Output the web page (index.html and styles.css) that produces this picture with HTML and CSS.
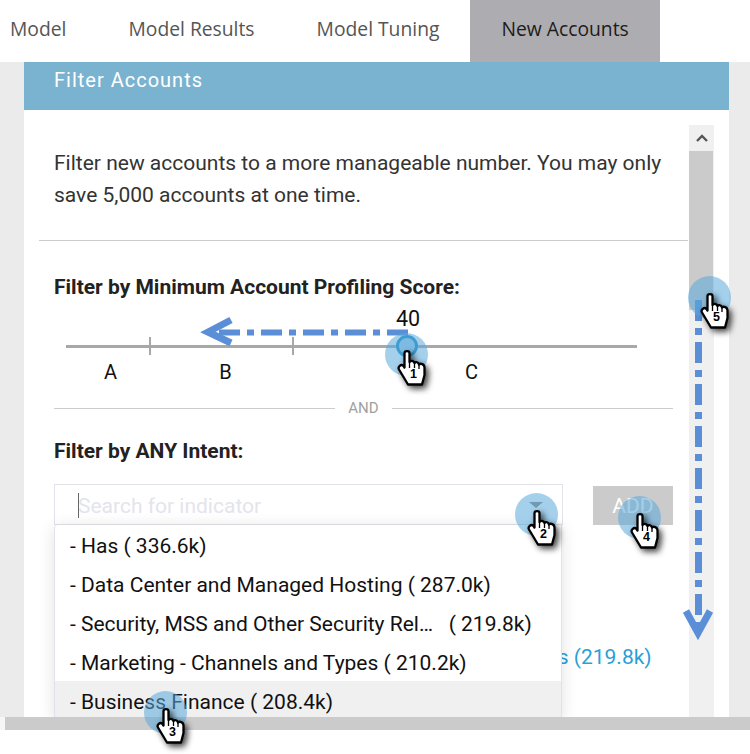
FILE: index.html
```html
<!DOCTYPE html>
<html lang="en">
<head>
    <meta charset="UTF-8">
    <meta name="viewport" content="width=device-width, initial-scale=1.0">
    <title>New Accounts</title>
    <link rel="stylesheet" href="styles.css">
</head>
<body>
    <nav class="tabs">
        <a class="tab tab-first">Model</a>
        <a class="tab">Model Results</a>
        <a class="tab">Model Tuning</a>
        <a class="tab active">New Accounts</a>
    </nav>

    <main class="stage">
        <section class="panel">
            <h1 class="panel-title">Filter Accounts</h1>
            <div class="panel-body">
                <div class="panel-content">
                    <p class="intro">Filter new accounts to a more manageable number. You may only save 5,000 accounts at one time.</p>
                    <div class="filters">
                        <h2 class="filter-label">Filter by Minimum Account Profiling Score:</h2>
                        <div class="slider">
                            <div class="slider-value">40</div>
                            <div class="slider-track">
                                <span class="grade grade-a">A</span>
                                <span class="grade grade-b">B</span>
                                <span class="grade grade-c">C</span>
                                <span class="slider-handle"></span>
                            </div>
                        </div>
                        <div class="and-divider">AND</div>
                        <h2 class="filter-label">Filter by ANY Intent:</h2>
                        <div class="search-row">
                            <div class="search-box">
                                <input class="search-input" type="text" placeholder="Search for indicator">
                                <span class="caret"></span>
                                <span class="search-arrow"></span>
                                <ul class="dropdown">
                                    <li>- Has ( 336.6k)</li>
                                    <li>- Data Center and Managed Hosting ( 287.0k)</li>
                                    <li>- Security, MSS and Other Security Rel…&nbsp;&nbsp; ( 219.8k)</li>
                                    <li>- Marketing - Channels and Types ( 210.2k)</li>
                                    <li class="hovered">- Business Finance ( 208.4k)</li>
                                </ul>
                            </div>
                            <button class="add-btn">ADD</button>
                        </div>
                        <a class="picked-link">Security, MSS and Other Security Related Services (219.8k)</a>
                    </div>
                </div>
                <div class="vscroll">
                    <div class="vscroll-up">
                        <svg width="12" height="8" viewBox="0 0 12 8"><path d="M1 7 L6 2 L11 7" fill="none" stroke="#555" stroke-width="2.4"/></svg>
                    </div>
                    <div class="vscroll-thumb"></div>
                </div>
            </div>
        </section>
    </main>

    <div class="hscroll"><div class="hscroll-thumb"></div></div>

    <svg class="arrows" width="750" height="754" viewBox="0 0 750 754">
        <path class="arrow-line arrow-thin" d="M408 332.500 H214"/>
        <path class="arrow-head" d="M231 320 L208 332 L231 343"/>
        <path class="arrow-line" d="M698.500 300 V630"/>
        <path class="arrow-head" d="M686 611 L698 633 L710 611"/>
    </svg>

    <svg width="0" height="0" class="defs">
        <symbol id="hand" viewBox="0 0 28 36" overflow="visible">
            <path d="M6.500 3 C6.500 0.500 11.500 0.500 11.500 3 V12 C12.500 10.500 16 10.500 16.500 13 C17.500 11.500 20.500 12 21 14.500 C22.500 13 26.500 14 26.500 17.500 V25 L24 34.500 H10 L1 19.500 C-0.500 17 3 13.500 5.500 16 L6.500 17.500 Z" fill="#fff" stroke="#000" stroke-width="2.300" stroke-linejoin="round"/>
            <path d="M11.500 12 V18 M16.500 13 V18 M21 14.500 V19" fill="none" stroke="#000" stroke-width="1.300"/>
        </symbol>
    </svg>

    <div class="pointer pointer-1"><span class="spot"></span><svg class="hand" width="28" height="36"><use href="#hand"/></svg><span class="step">1</span></div>
    <div class="pointer pointer-2"><span class="spot"></span><svg class="hand" width="28" height="36"><use href="#hand"/></svg><span class="step">2</span></div>
    <div class="pointer pointer-3"><span class="spot"></span><svg class="hand" width="28" height="36"><use href="#hand"/></svg><span class="step">3</span></div>
    <div class="pointer pointer-4"><span class="spot"></span><svg class="hand" width="28" height="36"><use href="#hand"/></svg><span class="step">4</span></div>
    <div class="pointer pointer-5"><span class="spot"></span><svg class="hand" width="28" height="36"><use href="#hand"/></svg><span class="step">5</span></div>
</body>
</html>
```

FILE: styles.css
```css
html, body {
    height: 100%;
    margin: 0;
    padding: 0;
}
body {
    position: relative;
    width: 750px;
    height: 754px;
    overflow: hidden;
    display: flex;
    flex-direction: column;
    background: #fff;
    font-family: Roboto, "Liberation Sans", sans-serif;
    color: #333;
}

/* tabs */
.tabs {
    display: flex;
    height: 62px;
    flex-shrink: 0;
}
.tab {
    padding: 0 31px;
    line-height: 58px;
    font-family: "Open Sans", sans-serif;
    font-size: 19.3px;
    color: #555;
}
.tab-first { margin-left: -21px; }
.tab.active {
    background: #adacb0;
    color: #1c1c1c;
}

/* main panel */
.stage {
    height: 655px;
    flex-shrink: 0;
    overflow: hidden;
    background: #ebebeb;
    padding: 0 21px 0 24px;
}
.panel {
    height: 100%;
    background: #fff;
}
.panel-title {
    height: 48px;
    margin: 0;
    padding-left: 30px;
    background: #7ab3cf;
    color: #fff;
    font-size: 20px;
    font-weight: 400;
    line-height: 36px;
    letter-spacing: 1px;
}
.panel-body {
    display: flex;
    padding: 15px 15px 0 15px;
    height: 592px;
}
.panel-content {
    width: 649px;
    margin-right: 1px;
}
.intro {
    margin: 0;
    padding: 22px 20px 29px 15px;
    font-size: 21px;
    line-height: 32px;
    border-bottom: 1px solid #ccc;
}
.filters {
    padding: 34px 15px 0 15px;
    position: relative;
}
.filter-label {
    margin: 0;
    font-size: 21px;
    font-weight: 700;
    line-height: 24px;
    color: #222;
}

/* slider */
.slider {
    padding: 8px 36px 0 12px;
}
.slider-value {
    padding-left: 330px;
    font-size: 21.500px;
    line-height: 24px;
    color: #111;
}
.slider-track {
    position: relative;
    display: grid;
    grid-template-columns: 85px 143px 343px;
    height: 3px;
    margin-top: 14px;
    margin-bottom: 51px;
    background: #a8a8a8;
}
.grade {
    position: relative;
    height: 18px;
    margin-top: -8px;
    border-right: 2px solid #a8a8a8;
    text-align: center;
    font-size: 20px;
    line-height: 70px;
    color: #111;
}
.grade-a { padding-left: 6px; }
.grade-b { padding-left: 8px; }
.grade-c { border-right: 0; padding-left: 12px; }
.slider-handle {
    position: absolute;
    left: 330px;
    top: -10px;
    width: 16px;
    height: 16px;
    border: 3px solid #1d8cc4;
    border-radius: 50%;
    background: #a8d0ea;
}

.and-divider {
    display: flex;
    align-items: center;
    gap: 13px;
    margin-bottom: 22px;
    font-size: 15px;
    line-height: 18px;
    color: #a0a0a0;
}
.and-divider::before,
.and-divider::after {
    content: "";
    flex: 1;
    border-top: 1px solid #ccc;
}

/* search */
.search-row {
    display: flex;
    align-items: flex-end;
    gap: 30px;
    margin-top: 21px;
}
.search-box {
    position: relative;
    width: 509px;
    height: 41px;
    box-sizing: border-box;
    border: 1px solid #e2e2ea;
}
.search-input {
    width: 100%;
    height: 100%;
    box-sizing: border-box;
    padding: 2px 0 0 23px;
    border: 0;
    outline: 0;
    background: transparent;
    font-family: Roboto, "Liberation Sans", sans-serif;
    font-size: 21px;
}
.search-input::placeholder { color: #e4e4ec; }
.caret {
    position: absolute;
    left: 23px;
    top: 8px;
    width: 1px;
    height: 25px;
    background: #666;
}
.search-arrow {
    position: absolute;
    right: 19px;
    top: 17px;
    border-left: 7px solid transparent;
    border-right: 7px solid transparent;
    border-top: 6px solid #888;
}
.add-btn {
    width: 80px;
    height: 39px;
    padding: 0;
    border: 0;
    background: #cbcbcb;
    color: #fff;
    font-family: Roboto, "Liberation Sans", sans-serif;
    font-size: 21px;
}
.dropdown {
    position: absolute;
    left: -1px;
    top: 40px;
    width: 506px;
    margin: 0;
    padding: 0;
    list-style: none;
    background: #fff;
    border-right: 1px solid #e2e2ea;
    border-left: 1px solid #e2e2ea;
    border-radius: 4px 0 0 0;
    box-shadow: 0 2px 16px rgba(0, 0, 0, 0.12);
    z-index: 2;
}
.dropdown li {
    height: 39px;
    padding-left: 15px;
    font-size: 21px;
    line-height: 43px;
    color: #111;
}
.dropdown li.hovered { background: #f0f0f0; }
.picked-link {
    display: block;
    margin-top: 120px;
    font-size: 21px;
    line-height: 24px;
    color: #2a9fd6;
    white-space: nowrap;
    padding-left: 51px;
}

/* fake scrollbars */
.vscroll {
    width: 25px;
    height: 592px;
    flex-shrink: 0;
    background: #f0f0f0;
}
.vscroll-up {
    height: 26px;
    display: flex;
    align-items: center;
    justify-content: center;
}
.vscroll-thumb {
    width: 24px;
    height: 159px;
    background: #cbcbcb;
}
.hscroll {
    height: 13px;
    flex-shrink: 0;
    padding-left: 5px;
    background: #f6f6f6;
}
.hscroll-thumb {
    height: 100%;
    background: #cbcbcb;
}

/* tutorial annotations over the screen */
.arrows {
    position: absolute;
    left: 0;
    top: 0;
    z-index: 5;
}
.arrow-line {
    fill: none;
    stroke: #5a8fd8;
    stroke-width: 7;
    stroke-dasharray: 21 7 7 7;
}
.arrow-thin { stroke-width: 6; }
.arrow-head {
    fill: none;
    stroke: #5a8fd8;
    stroke-width: 7;
}
.defs { position: absolute; }
.pointer {
    position: absolute;
    width: 0;
    height: 0;
    z-index: 6;
}
.pointer-1 { left: 407px; top: 350px; }
.pointer-2 { left: 537px; top: 510px; }
.pointer-3 { left: 166px; top: 708px; }
.pointer-4 { left: 640px; top: 513px; }
.pointer-5 { left: 710px; top: 293px; }
.spot {
    position: absolute;
    left: -22px;
    top: -17px;
    width: 43px;
    height: 43px;
    border-radius: 50%;
    background: rgba(90, 170, 220, 0.55);
}
.hand {
    position: absolute;
    left: -9px;
    top: 0;
    overflow: visible;
    filter: drop-shadow(3px 3px 3px rgba(0, 0, 0, 0.75));
}
.step {
    position: absolute;
    left: 0;
    top: 17px;
    width: 13px;
    font-family: "Liberation Sans", sans-serif;
    font-size: 12.500px;
    font-weight: 700;
    line-height: 14px;
    text-align: center;
    color: #000;
}
```
